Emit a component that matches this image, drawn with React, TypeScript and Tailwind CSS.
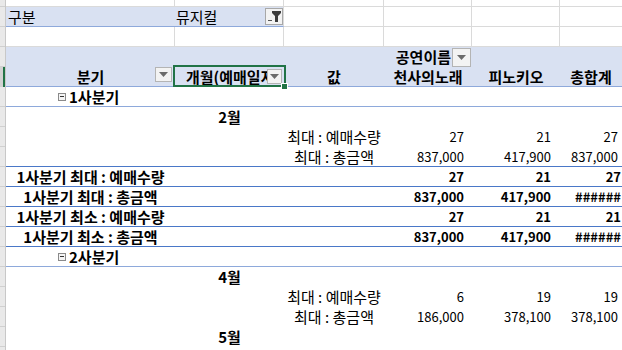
import React from "react";

const font = { fontFamily: "'Noto Sans CJK KR', 'Noto Sans', sans-serif" };

function DropBtn({ className }: { className: string }) {
  return (
    <div className={"flex items-center justify-center bg-[#f3f3f3] border border-[#b4b4b4] " + className}>
      <svg width="9" height="5" viewBox="0 0 9 5">
        <polygon points="0,0 9,0 4.5,5" fill="#6b6b6b" />
      </svg>
    </div>
  );
}

function FilterBtn() {
  return (
    <div className="w-[18px] h-[17px] bg-[#f3f3f3] border border-[#a8a8a8] flex items-center justify-center">
      <svg width="16" height="15" viewBox="0 0 16 15">
        <path d="M6 2 H15 V4 L12 7 V13 H9 V7 L6 4 Z" fill="#3c3c3c" />
        <rect x="2" y="11" width="4" height="1" fill="#555" />
      </svg>
    </div>
  );
}

function Minus() {
  return (
    <span className="inline-flex w-[8px] h-[8px] border border-[#8a8a8a] bg-[#f4f4f4] items-center justify-center mr-[3px]">
      <span className="w-[4px] h-[1px] bg-[#333]" />
    </span>
  );
}

type NumRow = { label: string; d: string; e: string; f: string };

function ValueRow({ r, border }: { r: NumRow; border: string }) {
  return (
    <div className={"h-[20px] flex items-center " + border}>
      <div className="w-[169px]" />
      <div className="w-[109px]" />
      <div className="w-[100px] text-center whitespace-nowrap">{r.label}</div>
      <div className="w-[88px] pr-[8px] text-right text-[13px]">{r.d}</div>
      <div className="w-[88px] pr-[9px] text-right text-[13px]">{r.e}</div>
      <div className="w-[66px] pr-[8px] text-right text-[13px]">{r.f}</div>
    </div>
  );
}

function TotalRow({ r }: { r: NumRow }) {
  return (
    <div className="h-[20px] flex items-center font-bold border-b border-[#4a78c8]">
      <div className="w-[169px] text-center whitespace-nowrap">{r.label}</div>
      <div className="w-[109px]" />
      <div className="w-[100px]" />
      <div className="w-[88px] pr-[8px] text-right text-[13px]">{r.d}</div>
      <div className="w-[88px] pr-[9px] text-right text-[13px]">{r.e}</div>
      <div className="w-[66px] pr-[5px] text-right text-[13px]">{r.f}</div>
    </div>
  );
}

function GroupRow({ label }: { label: string }) {
  return (
    <div className="h-[20px] flex items-center font-bold border-b border-[#8ea9db]">
      <div className="w-[169px] pl-[52px] flex items-center">
        <Minus />
        <span>{label}</span>
      </div>
    </div>
  );
}

function MonthRow({ label }: { label: string }) {
  return (
    <div className="h-[20px] flex items-center font-bold">
      <div className="w-[169px]" />
      <div className="w-[109px] text-center">{label}</div>
    </div>
  );
}

function GridRow({ h }: { h: string }) {
  return (
    <div className={"flex " + h}>
      <div className="w-[169px] border-r border-b border-[#dadada]" />
      <div className="w-[109px] border-r border-b border-[#dadada]" />
      <div className="w-[100px] border-r border-b border-[#dadada]" />
      <div className="w-[88px] border-r border-b border-[#dadada]" />
      <div className="w-[88px] border-r border-b border-[#dadada]" />
      <div className="w-[66px] border-b border-[#dadada]" />
    </div>
  );
}

export default function App() {
  const stripSegs = Array.from({ length: 17 });
  return (
    <div className="w-[622px] h-[350px] overflow-hidden bg-white flex items-start text-[15px] leading-[20px] text-black" style={font}>
      {/* row header strip */}
      <div className="w-[6px] shrink-0 self-stretch flex flex-col bg-[#e9e9e9] border-r border-[#c8c8c8]">
        <div className="h-[7px] shrink-0 border-b border-[#d0d0d0]" />
        {stripSegs.map((_, i) =>
          i === 3 ? (
            <div key={i} className="h-[20px] shrink-0 bg-[#d2d2d2] border-r-2 border-[#217346]" />
          ) : (
            <div key={i} className="h-[20px] shrink-0 border-b border-[#d0d0d0]" />
          )
        )}
      </div>

      <div className="w-[620px] shrink-0">
        <GridRow h="h-[7px]" />

        {/* filter row */}
        <div className="h-[20px] flex">
          <div className="w-[169px] bg-[#d9e1f2] border-b border-[#8ea9db] pl-[2px] flex items-center">구분</div>
          <div className="w-[109px] bg-[#d9e1f2] border-b border-[#8ea9db] border-r border-r-[#dadada] flex items-center justify-between pl-[1px]">
            <span>뮤지컬</span>
            <FilterBtn />
          </div>
          <div className="w-[100px] border-r border-b border-[#dadada]" />
          <div className="w-[88px] border-r border-b border-[#dadada]" />
          <div className="w-[88px] border-r border-b border-[#dadada]" />
          <div className="w-[66px] border-b border-[#dadada]" />
        </div>

        <GridRow h="h-[20px]" />

        {/* header row 1 */}
        <div className="h-[20px] flex bg-[#d9e1f2] font-bold">
          <div className="w-[169px]" />
          <div className="w-[109px]" />
          <div className="w-[100px]" />
          <div className="w-[88px] flex items-center justify-end pr-[1px]">
            <span>공연이름</span>
            <DropBtn className="w-[19px] h-[19px] ml-[1px]" />
          </div>
        </div>

        {/* header row 2 */}
        <div className="h-[20px] flex bg-[#d9e1f2] font-bold border-b border-[#8ea9db] relative z-10">
          <div className="w-[169px] relative text-center">
            <span>분기</span>
            <DropBtn className="absolute right-[3px] top-0 w-[17px] h-[15px]" />
          </div>
          <div className="w-[109px] relative flex items-center">
            <span className="flex-1 overflow-hidden whitespace-nowrap pl-[11px]">개월(예매일자)</span>
            <DropBtn className="w-[15px] h-[15px] mr-[2px] shrink-0" />
            <div className="absolute left-[-2px] right-[-2px] top-[-2px] bottom-[-1px] border-2 border-[#217346]" />
            <div className="absolute left-[106px] top-[16px] w-[7px] h-[7px] bg-[#217346] border border-white" />
          </div>
          <div className="w-[100px] text-center">값</div>
          <div className="w-[88px] text-center">천사의노래</div>
          <div className="w-[88px] text-center">피노키오</div>
          <div className="w-[66px] text-center pr-[4px]">총합계</div>
        </div>

        <GroupRow label="1사분기" />
        <MonthRow label="2월" />
        <ValueRow r={{ label: "최대 : 예매수량", d: "27", e: "21", f: "27" }} border="" />
        <ValueRow r={{ label: "최대 : 총금액", d: "837,000", e: "417,900", f: "837,000" }} border="border-b border-[#4a78c8]" />
        <TotalRow r={{ label: "1사분기 최대 : 예매수량", d: "27", e: "21", f: "27" }} />
        <TotalRow r={{ label: "1사분기 최대 : 총금액", d: "837,000", e: "417,900", f: "######" }} />
        <TotalRow r={{ label: "1사분기 최소 : 예매수량", d: "27", e: "21", f: "21" }} />
        <TotalRow r={{ label: "1사분기 최소 : 총금액", d: "837,000", e: "417,900", f: "######" }} />
        <GroupRow label="2사분기" />
        <MonthRow label="4월" />
        <ValueRow r={{ label: "최대 : 예매수량", d: "6", e: "19", f: "19" }} border="" />
        <ValueRow r={{ label: "최대 : 총금액", d: "186,000", e: "378,100", f: "378,100" }} border="" />
        <MonthRow label="5월" />
        <div className="h-[20px]" />
      </div>
    </div>
  );
}
